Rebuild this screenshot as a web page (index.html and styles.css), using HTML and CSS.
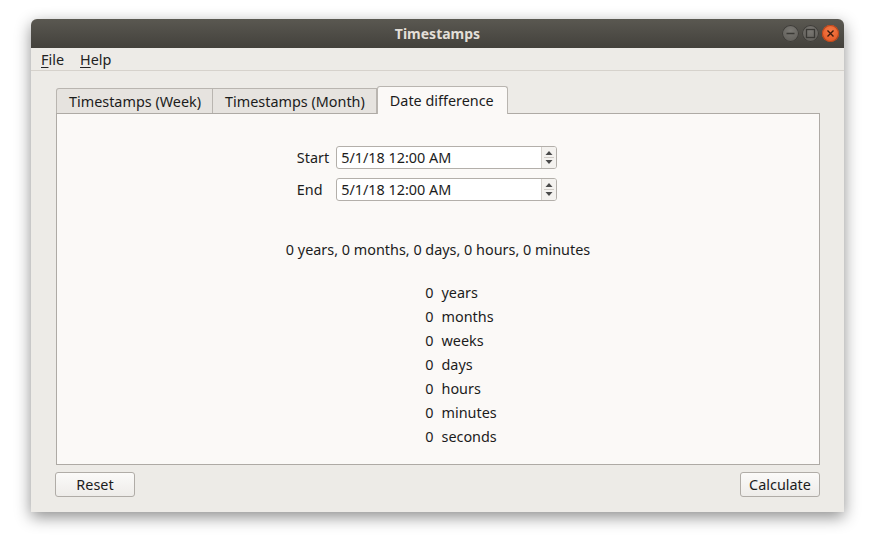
FILE: index.html
```html
<!DOCTYPE html>
<html>
<head>
<meta charset="utf-8">
<link rel="stylesheet" href="styles.css">
</head>
<body>
<div class="window">
  <div class="titlebar">
    <div class="title">Timestamps</div>
    <div class="controls">
      <span class="wbtn min"><svg width="17" height="17" viewBox="0 0 17 17"><line x1="4.5" y1="8.5" x2="12.5" y2="8.5" stroke="#3a3935" stroke-width="1.4"/></svg></span>
      <span class="wbtn max"><svg width="17" height="17" viewBox="0 0 17 17"><rect x="4.5" y="4.5" width="8" height="8" fill="none" stroke="#3a3935" stroke-width="1.3"/></svg></span>
      <span class="wbtn close"><svg width="17" height="17" viewBox="0 0 17 17"><path d="M5.5 5.5 L11.5 11.5 M11.5 5.5 L5.5 11.5" stroke="#3b1a0c" stroke-width="1.4"/></svg></span>
    </div>
  </div>
  <div class="menubar">
    <span class="menu"><u>F</u>ile</span>
    <span class="menu"><u>H</u>elp</span>
  </div>
  <div class="content">
    <div class="tabs">
      <div class="tab">Timestamps (Week)</div>
      <div class="tab">Timestamps (Month)</div>
      <div class="tab active">Date difference</div>
    </div>
    <div class="pane">
      <div class="form">
        <span class="label">Start</span>
        <div class="spin"><span class="val">5/1/18 12:00 AM</span><span class="arrows"><svg width="14" height="23" viewBox="0 0 14 23"><path d="M3.5 9 L7 5 L10.5 9 Z M3.5 14 L7 18 L10.5 14 Z" fill="#4a4a4a"/><line x1="2" y1="11.5" x2="12" y2="11.5" stroke="#cfcbc6" stroke-width="1"/></svg></span></div>
        <span class="label">End</span>
        <div class="spin"><span class="val">5/1/18 12:00 AM</span><span class="arrows"><svg width="14" height="23" viewBox="0 0 14 23"><path d="M3.5 9 L7 5 L10.5 9 Z M3.5 14 L7 18 L10.5 14 Z" fill="#4a4a4a"/><line x1="2" y1="11.5" x2="12" y2="11.5" stroke="#cfcbc6" stroke-width="1"/></svg></span></div>
      </div>
      <div class="summary">0 years, 0 months, 0 days, 0 hours, 0 minutes</div>
      <div class="list">
        <span class="n">0</span><span>years</span>
        <span class="n">0</span><span>months</span>
        <span class="n">0</span><span>weeks</span>
        <span class="n">0</span><span>days</span>
        <span class="n">0</span><span>hours</span>
        <span class="n">0</span><span>minutes</span>
        <span class="n">0</span><span>seconds</span>
      </div>
    </div>
    <div class="buttons">
      <button class="btn reset">Reset</button>
      <button class="btn calc">Calculate</button>
    </div>
  </div>
</div>
</body>
</html>
```

FILE: styles.css
```css
html, body {
  margin: 0;
  padding: 0;
  background: #ffffff;
}
body {
  font-family: "Noto Sans", "DejaVu Sans", sans-serif;
  font-size: 14.4px;
  color: #1c1c1c;
  height: 542px;
}
.window {
  margin: 19px 0 0 31px;
  width: 813px;
  height: 493px;
  background: #edebe7;
  border-radius: 6px 6px 0 0;
  box-shadow: 0 5px 16px rgba(0,0,0,0.45);
  display: flex;
  flex-direction: column;
  overflow: hidden;
}
.titlebar {
  height: 29px;
  background: linear-gradient(#5a5851, #43413c);
  position: relative;
  display: flex;
  align-items: center;
  justify-content: center;
  flex: none;
}
.title {
  color: #e3dfd8;
  font-weight: bold;
  font-size: 14px;
}
.controls {
  position: absolute;
  right: 5px;
  top: 6px;
  display: flex;
  gap: 3px;
}
.wbtn {
  width: 17px;
  height: 17px;
  border-radius: 50%;
  display: block;
}
.wbtn svg { display: block; }
.min, .max {
  background: radial-gradient(circle at 50% 35%, #7a7873, #5a5853);
  box-shadow: inset 0 0 0 1px #3f3d39;
}
.close {
  background: radial-gradient(circle at 50% 35%, #f37a47, #e0521e);
  box-shadow: inset 0 0 0 1px #b8451b;
}
.menubar {
  height: 22px;
  border-bottom: 1px solid #d6d2cc;
  display: flex;
  align-items: center;
  padding-left: 10px;
  gap: 16px;
  flex: none;
}
.menu {
  color: #222;
}
.menu u {
  text-decoration-thickness: 1px;
  text-underline-offset: 2px;
}
.content {
  flex: 1;
  padding: 15px 24px 0 25px;
  display: flex;
  flex-direction: column;
}
.tabs {
  display: flex;
  align-items: flex-end;
  height: 27px;
}
.tab {
  height: 25px;
  box-sizing: border-box;
  border: 1px solid #b9b5b0;
  border-bottom: none;
  border-left: none;
  padding: 0 11px 0 12px;
  display: flex;
  align-items: center;
  background: #e6e3df;
  color: #1c1c1c;
}
.tab:first-child {
  border-left: 1px solid #b9b5b0;
  border-radius: 3px 0 0 0;
}
.tab.active {
  background: #fbf9f7;
  border-left: 1px solid #b9b5b0;
  border-radius: 3px 3px 0 0;
  margin-left: 0;
  margin-bottom: -1px;
  height: 28px;
  padding: 0 13px 1px 12px;
  position: relative;
  z-index: 1;
}
.pane {
  height: 352px;
  box-sizing: border-box;
  background: #fbf9f7;
  border: 1px solid #aeaaa5;
  display: flex;
  flex-direction: column;
  align-items: center;
}
.form {
  margin-top: 32px;
  display: grid;
  grid-template-columns: auto 221px;
  column-gap: 7px;
  row-gap: 9px;
  align-items: center;
  margin-right: 22px;
}
.label { color: #1c1c1c; }
.spin {
  height: 23px;
  box-sizing: border-box;
  border: 1px solid #b3afaa;
  border-radius: 3px;
  background: #fff;
  display: flex;
  align-items: center;
  justify-content: space-between;
}
.val { padding-left: 4px; }
.arrows {
  width: 14px;
  height: 21px;
  border-left: 1px solid #d5d1cc;
  background: #f4f2ef;
  border-radius: 0 2px 2px 0;
  overflow: hidden;
}
.arrows svg { display: block; margin-top: -1px; }
.summary {
  margin-top: 39px;
  height: 20px;
  line-height: 20px;
}
.list {
  margin-top: 23px;
  display: grid;
  grid-template-columns: auto auto;
  column-gap: 8px;
  row-gap: 4px;
  line-height: 20px;
  margin-left: 46px;
}
.buttons {
  margin-top: 7px;
  display: flex;
  justify-content: space-between;
  margin-left: -1px;
}
.btn {
  font-family: inherit;
  font-size: 14.4px;
  color: #1c1c1c;
  height: 25px;
  border: 1px solid #b0aca7;
  border-radius: 3px;
  background: linear-gradient(#fbfaf9, #eeece9);
  padding: 0 8px;
}
.reset { width: 80px; }
.calc { width: 80px; }
```
